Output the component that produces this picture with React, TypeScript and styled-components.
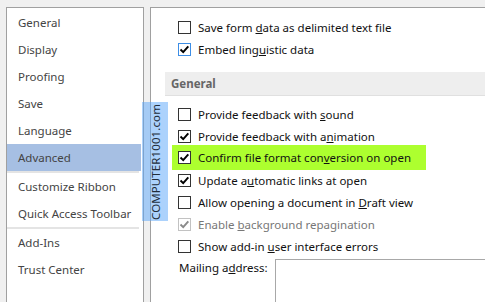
import React from 'react'
import styled, { createGlobalStyle, css } from 'styled-components'

const GlobalStyle = createGlobalStyle`
  html, body {
    margin: 0;
    padding: 0;
    background: #f0f0f0;
    font-family: 'Noto Sans', 'Open Sans', sans-serif;
    font-size: 11.5px;
    overflow: hidden;
  }
`

const Window = styled.div`
  position: relative;
  display: flex;
  gap: 6px;
  height: 302px;
  padding: 7px 0 0 6px;
  box-sizing: border-box;
  overflow: hidden;
`

const NavPanel = styled.nav`
  width: 138px;
  flex: none;
  box-sizing: border-box;
  background: #fff;
  border: 1px solid #a0a0a0;
  border-bottom: none;
  padding: 1px 2px 0 0;
  display: flex;
  flex-direction: column;
`

const NavItem = styled.div<{ $active?: boolean }>`
  height: 27px;
  flex: none;
  display: flex;
  align-items: center;
  padding-left: 11px;
  color: #444;
  background: ${(p) => (p.$active ? '#a6bfe3' : 'transparent')};
`

const NavSep = styled.div`
  height: 2px;
  flex: none;
  margin-right: 2px;
  background: #e4e4e4;
`

const Content = styled.main`
  flex: 1;
  background: #fff;
  border: 1px solid #a0a0a0;
  border-right: none;
  border-bottom: none;
  padding: 8px 0 0 14px;
  display: flex;
  flex-direction: column;
  color: #111;
  & > * {
    flex-shrink: 0;
  }
`

const Row = styled.label<{ $highlight?: boolean; $disabled?: boolean }>`
  display: flex;
  align-items: center;
  gap: 7px;
  height: 22px;
  padding-left: 13px;
  white-space: nowrap;
  color: ${(p) => (p.$disabled ? '#777' : '#111')};
  ${(p) =>
    p.$highlight &&
    css`
      align-self: flex-start;
      height: 25px;
      margin: -2px 0 -1px 7px;
      padding: 0 15px 0 6px;
      background: #adff2f;
    `}
`

const SectionHeader = styled.div`
  height: 23px;
  margin: 12px 0 7px;
  padding-left: 6px;
  display: flex;
  align-items: center;
  background: #eeeeee;
  border-bottom: 1px solid #e0e0e0;
  color: #666;
  font-weight: 700;
`

const Box = styled.span<{ $focus?: boolean; $disabled?: boolean }>`
  width: 13px;
  height: 13px;
  box-sizing: border-box;
  flex: none;
  display: flex;
  align-items: center;
  justify-content: center;
  background: #fff;
  border: 1px solid
    ${(p) => (p.$disabled ? '#c2c2c2' : p.$focus ? '#3d8ee6' : '#333')};
`

const MailRow = styled.div`
  display: flex;
  align-items: flex-start;
  margin-top: 2px;
  padding-left: 14px;
  gap: 15px;
`

const MailLabel = styled.span`
  width: 81px;
  padding-top: 1px;
  white-space: nowrap;
`

const MailBox = styled.div`
  flex: 1;
  height: 60px;
  border: 1px solid #a8a8a8;
  border-right: none;
`

const Watermark = styled.div`
  position: absolute;
  left: 142px;
  top: 102px;
  width: 26px;
  height: 119px;
  background: rgba(90, 165, 250, 0.5);
  display: flex;
  align-items: center;
  justify-content: center;
`

const WatermarkText = styled.span`
  writing-mode: vertical-rl;
  transform: rotate(180deg);
  color: #222d3a;
  font-size: 11.5px;
  letter-spacing: 0.1px;
  white-space: nowrap;
`

type CheckProps = { checked?: boolean; focus?: boolean; disabled?: boolean }

const Check: React.FC<CheckProps> = ({ checked, focus, disabled }) => (
  <Box $focus={focus} $disabled={disabled}>
    {checked && (
      <svg width="11" height="11" viewBox="0 0 11 11">
        <path
          d="M1.5 5.5 L4.2 8.2 L9.3 2.3"
          fill="none"
          stroke={disabled ? '#8a8a8a' : '#000'}
          strokeWidth="1.9"
        />
      </svg>
    )}
  </Box>
)

const navTop = ['General', 'Display', 'Proofing', 'Save', 'Language', 'Advanced']
const navMid = ['Customize Ribbon', 'Quick Access Toolbar']
const navEnd = ['Add-Ins', 'Trust Center']

export default function App() {
  return (
    <>
      <GlobalStyle />
      <Window>
        <NavPanel>
          {navTop.map((n) => (
            <NavItem key={n} $active={n === 'Advanced'}>
              {n}
            </NavItem>
          ))}
          <NavSep />
          {navMid.map((n) => (
            <NavItem key={n}>{n}</NavItem>
          ))}
          <NavSep />
          {navEnd.map((n) => (
            <NavItem key={n}>{n}</NavItem>
          ))}
        </NavPanel>

        <Content>
          <Row>
            <Check />
            <span>
              Save form <u>d</u>ata as delimited text file
            </span>
          </Row>
          <Row>
            <Check checked focus />
            <span>
              Embed ling<u>u</u>istic data
            </span>
          </Row>

          <SectionHeader>General</SectionHeader>

          <Row>
            <Check />
            <span>
              Provide feedback with <u>s</u>ound
            </span>
          </Row>
          <Row>
            <Check checked />
            <span>
              Provide feedback with a<u>n</u>imation
            </span>
          </Row>
          <Row $highlight>
            <Check checked />
            <span>
              Confirm file format con<u>v</u>ersion on open
            </span>
          </Row>
          <Row>
            <Check checked />
            <span>
              Update a<u>u</u>tomatic links at open
            </span>
          </Row>
          <Row>
            <Check />
            <span>
              Allow opening a document in <u>D</u>raft view
            </span>
          </Row>
          <Row $disabled>
            <Check checked disabled />
            <span>
              Enable <u>b</u>ackground repagination
            </span>
          </Row>
          <Row>
            <Check />
            <span>
              Show add-in <u>u</u>ser interface errors
            </span>
          </Row>

          <MailRow>
            <MailLabel>
              Mailing a<u>d</u>dress:
            </MailLabel>
            <MailBox />
          </MailRow>
        </Content>

        <Watermark>
          <WatermarkText>COMPUTER1001.com</WatermarkText>
        </Watermark>
      </Window>
    </>
  )
}
